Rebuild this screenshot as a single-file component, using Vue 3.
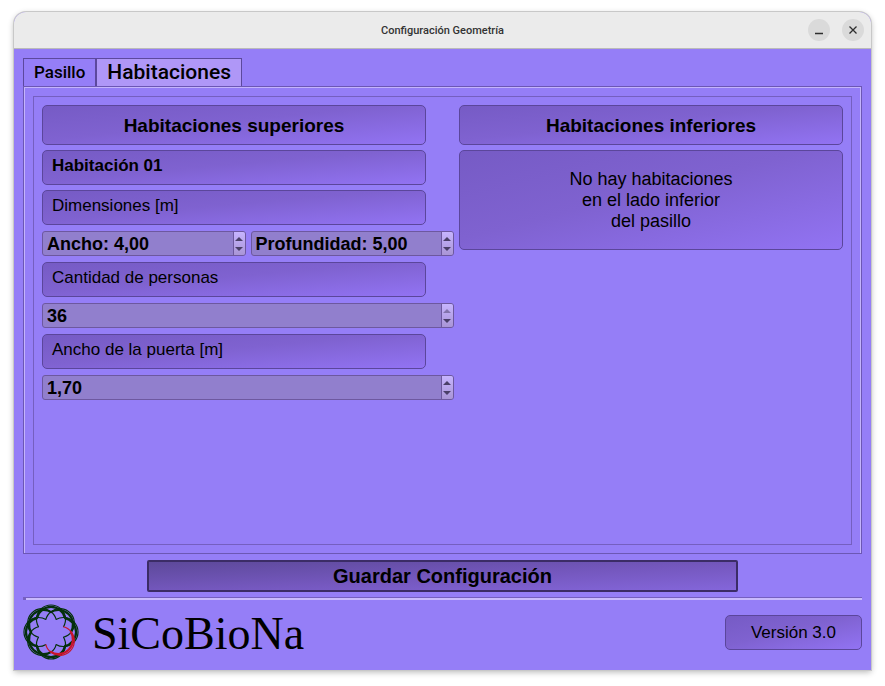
<template>
  <div class="window">
    <header class="titlebar">
      <h1>Configuración Geometría</h1>
      <div class="window-buttons">
        <button type="button" aria-label="Minimizar">
          <svg viewBox="0 0 22 22"><path d="M7 14.5h8" /></svg>
        </button>
        <button type="button" aria-label="Cerrar">
          <svg viewBox="0 0 22 22"><path d="M7.5 7.5l7 7M14.5 7.5l-7 7" /></svg>
        </button>
      </div>
    </header>

    <main class="content">
      <!-- TABS -->
      <div class="tabs" role="tablist">
        <button
          v-for="tab in tabs"
          :key="tab"
          type="button"
          role="tab"
          class="tab"
          :class="{ active: tab === activeTab }"
          :aria-selected="tab === activeTab"
          @click="activeTab = tab"
        >
          {{ tab }}
        </button>
      </div>

      <div class="tab-panel" role="tabpanel">
        <div class="rooms">
          <section class="column upper">
            <h2 class="box heading">Habitaciones superiores</h2>
            <h3 class="box label">Habitación 01</h3>

            <template v-for="group in groups" :key="group.label">
              <label class="box label" :for="group.fields[0].id">{{ group.label }}</label>
              <div class="spin-row">
                <div v-for="field in group.fields" :key="field.id" class="spin">
                  <input
                    :id="field.id"
                    type="text"
                    :aria-label="field.name"
                    :value="format(field)"
                    @change="update(field, $event)"
                  />
                  <div class="arrows">
                    <button
                      type="button"
                      aria-label="Aumentar"
                      :disabled="field.value >= field.max"
                      @click="step(field, 1)"
                    >
                      <svg viewBox="0 0 8 4"><path d="M0 4L4 0l4 4z" /></svg>
                    </button>
                    <button
                      type="button"
                      aria-label="Disminuir"
                      :disabled="field.value <= field.min"
                      @click="step(field, -1)"
                    >
                      <svg viewBox="0 0 8 4"><path d="M0 0h8L4 4z" /></svg>
                    </button>
                  </div>
                </div>
              </div>
            </template>
          </section>

          <section class="column lower">
            <h2 class="box heading">Habitaciones inferiores</h2>
            <p class="box empty">
              No hay habitaciones<br />en el lado inferior<br />del pasillo
            </p>
          </section>
        </div>
      </div>

      <button type="button" class="save">Guardar Configuración</button>

      <hr />

      <!-- FOOTER -->
      <footer>
        <div class="brand">
          <svg class="logo" viewBox="-28 -28 56 56" aria-hidden="true">
            <g
              v-for="angle in angles"
              :key="angle"
              :transform="`rotate(${angle})`"
              :class="{ red: angle === 45 }"
            >
              <path class="thin" d="M5 12.4A14.5 14.5 0 1 0 5 -12.4" />
              <path class="thick" d="M13.5 14.2A14.5 14.5 0 0 0 13.5 -14.2" />
            </g>
          </svg>
          <span class="name">SiCoBioNa</span>
        </div>
        <span class="box version">Versión 3.0</span>
      </footer>
    </main>
  </div>
</template>

<script setup>
import { ref } from 'vue'

const tabs = ['Pasillo', 'Habitaciones']
const activeTab = ref('Habitaciones')

const groups = ref([
  {
    label: 'Dimensiones [m]',
    fields: [
      { id: 'ancho', name: 'Ancho', prefix: 'Ancho: ', value: 4, step: 0.1, min: 1, max: 20, decimals: 2 },
      { id: 'profundidad', name: 'Profundidad', prefix: 'Profundidad: ', value: 5, step: 0.1, min: 1, max: 20, decimals: 2 }
    ]
  },
  {
    label: 'Cantidad de personas',
    fields: [
      { id: 'personas', name: 'Cantidad de personas', prefix: '', value: 36, step: 1, min: 0, max: 36, decimals: 0 }
    ]
  },
  {
    label: 'Ancho de la puerta [m]',
    fields: [
      { id: 'puerta', name: 'Ancho de la puerta', prefix: '', value: 1.7, step: 0.1, min: 0.5, max: 4, decimals: 2 }
    ]
  }
])

// the red petal goes last so it stays on top
const angles = [90, 135, 180, 225, 270, 315, 0, 45]

const format = (field) =>
  field.prefix + field.value.toFixed(field.decimals).replace('.', ',')

const clamp = (field, value) => Math.min(field.max, Math.max(field.min, value))

const step = (field, direction) => {
  field.value = clamp(field, field.value + direction * field.step)
}

const update = (field, event) => {
  const number = parseFloat(event.target.value.replace(field.prefix, '').replace(',', '.'))
  if (!isNaN(number)) {
    field.value = clamp(field, number)
  }
  event.target.value = format(field)
}
</script>

<style>
body {
  margin: 0;
  background: #fff;
}
</style>

<style scoped>
* {
  box-sizing: border-box;
}

.window {
  display: flex;
  flex-direction: column;
  min-height: calc(100vh - 28px);
  margin: 12px 14px 16px;
  border-radius: 12px 12px 0 0;
  overflow: hidden;
  background: #957ef7;
  color: #000;
  font-family: "Liberation Sans", Arial, sans-serif;
  box-shadow: 0 0 0 1px #c8c8c8, 0 2px 6px rgba(0, 0, 0, 0.3);
}

button {
  margin: 0;
  padding: 0;
  border: none;
  color: inherit;
  cursor: pointer;
}

.titlebar {
  display: grid;
  grid-template-columns: 1fr auto 1fr;
  align-items: center;
  height: 37px;
  padding: 0 7px;
  background: #ebebeb;
  border-bottom: 1px solid #bababa;
}

h1 {
  grid-column: 2;
  margin: 0;
  color: #333;
  font: 500 11px Roboto, sans-serif;
}

.window-buttons {
  display: flex;
  justify-content: flex-end;
  gap: 12px;
}

.window-buttons button {
  width: 22px;
  height: 22px;
  border-radius: 50%;
  background: #dadada;
}

.window-buttons svg {
  display: block;
  fill: none;
  stroke: #2e2e2e;
  stroke-width: 1.3;
}

.content {
  display: flex;
  flex: 1;
  flex-direction: column;
  padding: 9px 9px 10px;
}

.tabs {
  display: flex;
}

.tab {
  height: 28px;
  padding: 0 10px 1px;
  border: 1px solid #5c489d;
  border-bottom: none;
  background: #957ef7;
  font: 500 17px Roboto, sans-serif;
}

.tab.active {
  background: #af97f7;
  font-size: 21px;
  line-height: 25px;
}

.tab-panel {
  display: flex;
  flex: 1;
  padding: 8px;
  border: 1px solid #6c57b4;
  box-shadow: inset 1px 1px #c4b4fc, inset -1px 0 #c4b4fc;
}

.rooms {
  display: flex;
  flex: 1;
  gap: 5px;
  margin: 1px 1px 0;
  padding: 8px;
  border: 1px solid #755fc0;
}

.column {
  display: flex;
  flex-direction: column;
  gap: 5px;
  min-width: 0;
}

/* the spin boxes run 28px past the labels */
.upper {
  flex: 1 1 28px;
}

.upper > .box {
  margin-right: 28px;
}

.lower {
  flex: 1 1 0;
}

.box {
  margin: 0;
  border: 1px solid #5b469b;
  border-radius: 5px;
  background: linear-gradient(to bottom right, #765bc5, #7f62d0 45%, #9273f3);
  font-size: 17px;
  font-weight: normal;
}

.heading {
  padding: 9px 8px 7px;
  font-size: 19px;
  font-weight: bold;
  line-height: 22px;
  text-align: center;
}

.label {
  height: 35px;
  padding: 5px 9px;
  line-height: 20px;
}

h3.label {
  font-weight: bold;
}

.empty {
  padding: 18px 8px 17px;
  font-size: 18px;
  line-height: 21px;
  text-align: center;
}

.spin-row {
  display: flex;
  gap: 5px;
  padding: 1px 0;
}

.spin {
  display: flex;
  flex: 1;
  min-width: 0;
  height: 25px;
  border: 1px solid #6d589f;
  border-radius: 3px;
  background: #917fcd;
  overflow: hidden;
}

.spin input {
  flex: 1;
  width: 0;
  padding: 2px 4px 0;
  border: none;
  outline: none;
  background: none;
  color: #000;
  font: bold 18px "Liberation Sans", Arial, sans-serif;
}

.arrows {
  display: flex;
  flex-direction: column;
  width: 12px;
  padding: 2px 1px 1px 0;
  border-left: 1px solid #6d589f;
  background: linear-gradient(#c6b4ff, #a995d6);
}

.arrows button {
  display: flex;
  flex: 1;
  align-items: center;
  justify-content: center;
  background: none;
}

.arrows svg {
  width: 8px;
  height: 4px;
  fill: #4a3f68;
}

.arrows button:disabled svg {
  opacity: 0.5;
}

.save {
  height: 32px;
  margin: 6px 124px 0;
  border: 2px solid #3b2c66;
  border-radius: 2px;
  background: linear-gradient(to bottom right, #5d499a, #7558bf 55%, #8466da);
  font: bold 20px "Liberation Sans", Arial, sans-serif;
}

hr {
  width: 100%;
  height: 3px;
  margin: 5px 0 4px;
  border: none;
  border-top: 1px solid #755fc0;
  border-left: 3px solid #755fc0;
  background: #c9bafd;
}

footer {
  display: flex;
  align-items: center;
  justify-content: space-between;
}

.brand {
  display: flex;
  align-items: center;
  gap: 13px;
}

.logo {
  width: 56px;
  height: 56px;
  fill: none;
  stroke: #04300c;
}

.logo .red {
  stroke: #c8142c;
}

.thin {
  stroke-width: 1.2;
}

.thick {
  stroke-width: 2.2;
}

.name {
  padding-top: 4px;
  font: 46px/52px "Liberation Serif", "Times New Roman", serif;
}

.version {
  padding: 7px 25px 6px;
  line-height: 20px;
}
</style>
